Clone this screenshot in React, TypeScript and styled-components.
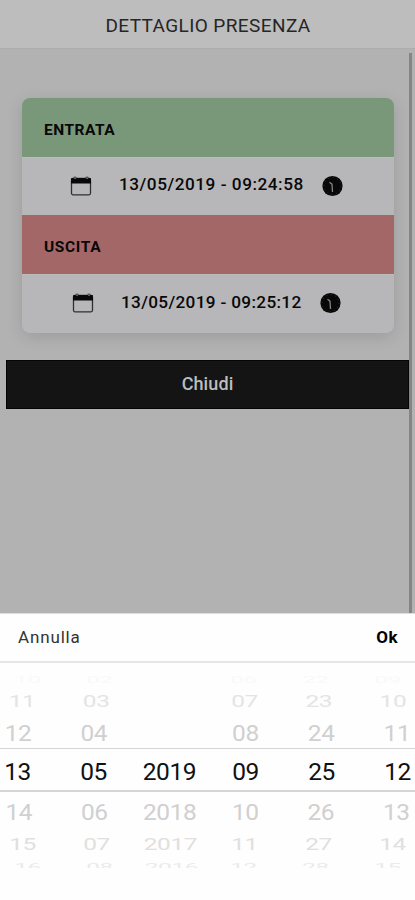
import React from "react";
import styled, { createGlobalStyle } from "styled-components";

const GlobalStyle = createGlobalStyle`
  * { box-sizing: border-box; }
  body { margin: 0; background: #b2b2b2; }
`;

const Screen = styled.div`
  width: 415px;
  height: 900px;
  overflow: hidden;
  display: flex;
  flex-direction: column;
  background: #b2b2b2;
  color: #080808;
  font-family: Roboto, sans-serif;
`;

const Header = styled.header`
  height: 49px;
  flex: none;
  display: flex;
  align-items: center;
  justify-content: center;
  padding: 3px 0 0 1px;
  background: #bdbdbd;
  border-bottom: 1px solid #adadad;
`;

const Title = styled.h1`
  margin: 0;
  color: #262626;
  font-size: 19px;
  line-height: 24px;
  font-weight: 400;
  letter-spacing: 0.4px;
  white-space: nowrap;
`;

const Content = styled.main`
  height: 564px;
  flex: none;
  display: flex;
  justify-content: space-between;
`;

const Page = styled.div`
  width: 409px;
  padding: 49px 0 0 6px;
`;

const ScrollThumb = styled.div`
  width: 3px;
  margin: 4px 3px 0 0;
  background: #858585;
`;

const Card = styled.section`
  width: 372px;
  height: 235px;
  margin-left: 16px;
  display: grid;
  grid-template-rows: 59px 58px 59px 59px;
  overflow: hidden;
  border-radius: 8px;
  background: #b7b7b9;
  box-shadow: 0 4px 16px rgba(0, 0, 0, 0.13);
`;

const Band = styled.h2<{ $color: string; $spacing: number }>`
  margin: 0;
  padding: 4px 0 0 22px;
  display: flex;
  align-items: center;
  background: ${(p) => p.$color};
  font-size: 15.5px;
  font-weight: 700;
  letter-spacing: ${(p) => p.$spacing}px;
`;

const Stamp = styled.div`
  display: flex;
  align-items: center;
  justify-content: center;
  border-top: 1px solid #bdbdba;
  padding: 0 2px 5px 0;
`;

const StampText = styled.span<{ $width: number; $spacing: number }>`
  width: ${(p) => p.$width}px;
  margin: 0 18px 0 27px;
  font-size: 17.2px;
  line-height: 20px;
  font-weight: 500;
  letter-spacing: ${(p) => p.$spacing}px;
  white-space: nowrap;
`;

const Icon = styled.svg`
  display: block;
  flex: none;
  margin-top: 3px;
`;

const CloseButton = styled.button`
  display: flex;
  align-items: center;
  justify-content: center;
  width: 403px;
  height: 49px;
  margin: 27px 0 0;
  padding: 0 0 2px;
  border: 1px solid #050505;
  background: #141414;
  color: #bdbdbd;
  font: 500 18px Roboto, sans-serif;
  letter-spacing: 0.1px;
`;

const Sheet = styled.section`
  height: 287px;
  flex: none;
  background: #fefefe;
`;

const Toolbar = styled.div`
  height: 50px;
  display: flex;
  align-items: center;
  justify-content: space-between;
  padding: 0 17px 1px 18px;
  border-top: 1px solid #ddd;
  border-bottom: 2px solid #e6e6e6;
`;

const Action = styled.button<{ $strong?: boolean }>`
  padding: 0;
  border: 0;
  background: none;
  color: ${(p) => (p.$strong ? "#000" : "#333")};
  font: ${(p) => (p.$strong ? 700 : 400)} 17px Roboto, sans-serif;
  letter-spacing: ${(p) => (p.$strong ? 0.5 : 0.85)}px;
`;

const Wheel = styled.div`
  height: 205px;
  overflow: hidden;
  padding-top: 8px;
`;

const WheelRow = styled.div<{
  $height: number;
  $top: number;
  $pitch: number;
  $color: string;
  $selected: boolean;
}>`
  height: ${(p) => p.$height}px;
  display: grid;
  grid-template-columns: repeat(6, ${(p) => p.$pitch}px);
  justify-content: center;
  align-items: center;
  color: ${(p) => p.$color};
  border: solid #d5d5d5;
  border-width: ${(p) => (p.$selected ? "1px 0 2px" : "0")};
  padding-top: ${(p) => p.$top}px;
`;

const Digits = styled.span<{ $flatten: number }>`
  text-align: center;
  font-size: 24.5px;
  line-height: 16px;
  height: 16px;
  letter-spacing: -0.4px;
  transform: scaleY(${(p) => p.$flatten});
`;

const CalendarIcon = () => (
  <Icon width="22" height="20" viewBox="0 0 22 20">
    <rect x="1.5" y="2.5" width="19" height="16.3" rx="1.5" fill="none" stroke="#303030" strokeWidth="1.3" />
    <path d="M1 3Q1 2 2 2H20Q21 2 21 3V7.4H1Z" fill="#080808" />
    <path d="M5 0.8V3M17 0.8V3" stroke="#222" strokeWidth="2.6" />
    <path d="M5 1.2V3M17 1.2V3" stroke="#999" strokeWidth="1" />
  </Icon>
);

const ClockIcon = () => (
  <Icon width="22" height="22" viewBox="0 0 22 22">
    <circle cx="10.5" cy="11" r="10.1" fill="#080808" />
    <circle cx="10.5" cy="11" r="8.4" fill="none" stroke="#444" strokeWidth="0.9" strokeDasharray="0.8 3.598" />
    <path d="M7.5 7.2L10 9.2L10.5 17" fill="none" stroke="#858585" strokeWidth="1.3" />
  </Icon>
);

const rows = [
  { height: 17, top: 0, pitch: 72, flatten: 0.36, color: "#f9f9f9", values: ["10", "02", "", "06", "22", "09"] },
  { height: 27, top: 0, pitch: 74.2, flatten: 0.68, color: "#e4e4e4", values: ["11", "03", "", "07", "23", "10"] },
  { height: 33, top: 4, pitch: 75.8, flatten: 0.93, color: "#d0d0d0", values: ["12", "04", "", "08", "24", "11"] },
  { height: 44, top: 5, pitch: 76, flatten: 1, color: "#111", values: ["13", "05", "2019", "09", "25", "12"] },
  { height: 38, top: 3, pitch: 75.5, flatten: 0.93, color: "#d0d0d0", values: ["14", "06", "2018", "10", "26", "13"] },
  { height: 27, top: 2, pitch: 74, flatten: 0.68, color: "#e0e0e0", values: ["15", "07", "2017", "11", "27", "14"] },
  { height: 20, top: 0, pitch: 72, flatten: 0.45, color: "#ebebeb", values: ["16", "08", "2016", "12", "28", "15"] },
];

export default function App() {
  return (
    <>
      <GlobalStyle />
      <Screen>
        <Header>
          <Title>DETTAGLIO PRESENZA</Title>
        </Header>
        <Content>
          <Page>
            <Card>
              <Band $color="#799779" $spacing={0.5}>ENTRATA</Band>
              <Stamp>
                <CalendarIcon />
                <StampText $width={185} $spacing={0.53}>13/05/2019 - 09:24:58</StampText>
                <ClockIcon />
              </Stamp>
              <Band $color="#a36767" $spacing={0.65}>USCITA</Band>
              <Stamp>
                <CalendarIcon />
                <StampText $width={181} $spacing={0.33}>13/05/2019 - 09:25:12</StampText>
                <ClockIcon />
              </Stamp>
            </Card>
            <CloseButton>Chiudi</CloseButton>
          </Page>
          <ScrollThumb />
        </Content>
        <Sheet>
          <Toolbar>
            <Action>Annulla</Action>
            <Action $strong>Ok</Action>
          </Toolbar>
          <Wheel>
            {rows.map((row, index) => (
              <WheelRow
                key={index}
                $height={row.height}
                $top={row.top}
                $pitch={row.pitch}
                $color={row.color}
                $selected={index === 3}
              >
                {row.values.map((value, column) => (
                  <Digits key={column} $flatten={row.flatten}>{value}</Digits>
                ))}
              </WheelRow>
            ))}
          </Wheel>
        </Sheet>
      </Screen>
    </>
  );
}
